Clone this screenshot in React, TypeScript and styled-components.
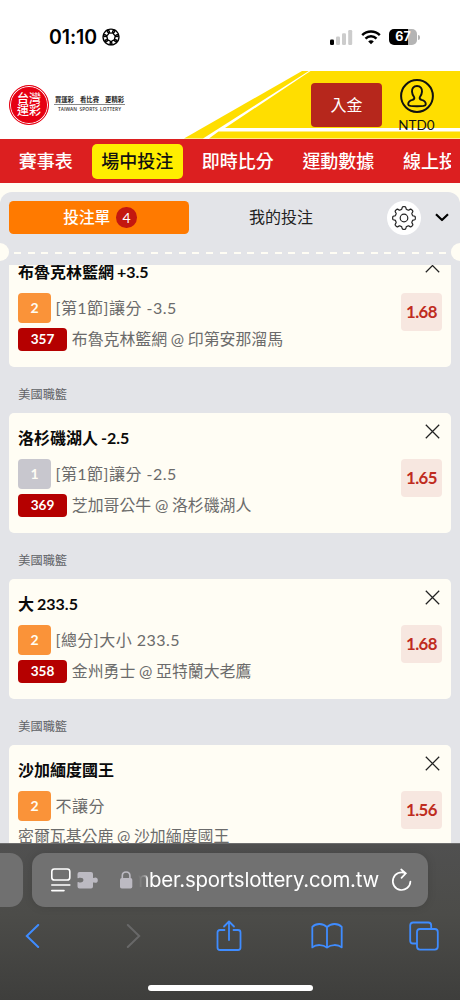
import React from 'react';
import styled, { createGlobalStyle, css } from 'styled-components';

const Global = createGlobalStyle`
  * { box-sizing: border-box; }
  body {
    margin: 0;
    background: #fff;
    font-family: Lato, "Noto Sans CJK TC", sans-serif;
  }
`;

const Screen = styled.div`
  width: 460px;
  height: 1000px;
  overflow: hidden;
  display: flex;
  flex-direction: column;
  background: #fffdf4;
`;

const StatusBar = styled.div`
  height: 71px;
  flex: none;
  background: #fff;
  display: flex;
  justify-content: space-between;
  align-items: flex-start;
  padding: 27px 40px 0 49px;
`;

const StatusGroup = styled.div<{ $gap: number }>`
  display: flex;
  align-items: center;
  height: 20px;
  gap: ${(p) => p.$gap}px;
`;

const Clock = styled.span`
  font: 600 19.5px/20px Inter, sans-serif;
  letter-spacing: -0.1px;
  color: #000;
`;

const Battery = styled.div`
  width: 28px;
  height: 16px;
  border-radius: 5px;
  background: linear-gradient(90deg, #000 67%, #b4b4b4 67%);
  color: #fff;
  font: 700 12.5px/16px Inter, sans-serif;
  text-align: center;
`;

const BatteryWrap = styled.div`
  display: flex;
  align-items: center;
  gap: 1px;
  &::after {
    content: '';
    width: 2px;
    height: 5px;
    border-radius: 0 2px 2px 0;
    background: #b4b4b4;
  }
`;

const Header = styled.header`
  height: 67.5px;
  flex: none;
  position: relative;
  background: #fff;
  display: flex;
  align-items: flex-start;
  padding-left: 9px;
`;

const HeaderArt = styled.svg`
  position: absolute;
  inset: 0;
`;

const Seal = styled.div`
  width: 40px;
  height: 40px;
  margin-top: 13.5px;
  border-radius: 50%;
  background: #e60012;
  border: 1.3px solid #e60012;
  box-shadow: inset 0 0 0 0.9px #fff;
  color: #fff;
  font: 500 12px/12.5px "Noto Sans CJK TC", sans-serif;
  text-align: center;
  padding-top: 6px;
`;

const Slogan = styled.div`
  margin: 24px 0 0 5px;
  width: 71px;
`;

const SloganZh = styled.div`
  display: flex;
  justify-content: space-between;
  padding: 0 1px 0 1px;
  font: 700 6.3px/9px "Noto Sans CJK TC", sans-serif;
  color: #222;
  border-bottom: 0.8px solid #888;
  height: 10px;
`;

const SloganEn = styled.div`
  font: 600 4.8px/7px "Open Sans", sans-serif;
  letter-spacing: 0.08px;
  color: #333;
  text-align: center;
  white-space: nowrap;
  word-spacing: 1px;
  padding-top: 1px;
`;

const Deposit = styled.button`
  position: relative;
  margin: 12px 0 0 186px;
  width: 71px;
  height: 44px;
  padding: 0;
  border: 0;
  border-radius: 4px;
  background: #b6271c;
  color: #fff;
  font: 400 16px/44px Lato, "Noto Sans CJK TC", sans-serif;
`;

const Account = styled.div`
  position: relative;
  margin: 8px 0 0 13px;
  width: 43px;
  display: flex;
  flex-direction: column;
  align-items: center;
  font: 400 13.5px/15px Lato, sans-serif;
  color: #111;
  gap: 5px;
`;

const Nav = styled.nav`
  height: 44.5px;
  flex: none;
  background: #dc1f20;
  padding: 5px 9px 0;
  display: flex;
`;

const NavStrip = styled.div`
  display: flex;
  width: 442px;
  overflow: hidden;
  gap: 9.2px;
`;

const NavItem = styled.a<{ $active?: boolean }>`
  flex: none;
  height: 35.5px;
  padding: 0 9.7px;
  border-radius: 5px;
  font: 500 18px/33px "Noto Sans CJK TC", sans-serif;
  color: ${(p) => (p.$active ? '#111' : '#fff')};
  background: ${(p) => (p.$active ? '#ffee00' : 'transparent')};
`;

const Slip = styled.section`
  margin-top: 9px;
  height: 651px;
  flex: none;
  display: flex;
  flex-direction: column;
  background: #e3e4e8;
  border-radius: 12px 12px 0 0;
`;

const Tabs = styled.div`
  height: 51px;
  flex: none;
  display: flex;
  align-items: center;
  padding: 0 9px;
`;

const Tab = styled.div<{ $active?: boolean }>`
  height: 32.5px;
  border-radius: 4.5px;
  display: flex;
  align-items: flex-start;
  justify-content: center;
  gap: 6px;
  font: 400 16px/31.5px "Noto Sans CJK TC", sans-serif;
  ${(p) =>
    p.$active
      ? css`width: 180px; background: #ff7a00; color: #fff; font-weight: 500; font-size: 15.7px; padding-left: 2px;`
      : css`width: 184px; color: #222;`}
`;

const Count = styled.span`
  width: 20.5px;
  height: 20.5px;
  margin-top: 6px;
  border-radius: 50%;
  background: #c3170f;
  font: 400 14px/21px Lato, sans-serif;
  text-align: center;
`;

const GearButton = styled.div`
  width: 34px;
  height: 34px;
  margin: 0 14px;
  border-radius: 50%;
  background: #fff;
  display: grid;
  place-items: center;
`;

const Perforation = styled.div`
  height: 18px;
  flex: none;
  display: flex;
  justify-content: space-between;
  align-items: center;
  overflow: hidden;
`;

const Notch = styled.div<{ $side: 'left' | 'right' }>`
  width: 9px;
  height: 18px;
  background: #fffdf4;
  border-radius: ${(p) => (p.$side === 'left' ? '0 9px 9px 0' : '9px 0 0 9px')};
`;

const Dashes = styled.div`
  flex: 1;
  height: 2px;
  margin: 2px 4px 0 5px;
  background: repeating-linear-gradient(90deg, #fffdf4 0 7px, transparent 7px 13.72px);
`;

const List = styled.div`
  margin-top: 4px;
  height: 578px;
  flex: none;
  overflow: hidden;
  padding: 0 9px;
  display: flex;
  flex-direction: column;
`;

const League = styled.div`
  height: 46px;
  flex: none;
  padding-left: 9.3px;
  font: 400 12.2px/55px "Noto Sans CJK TC", sans-serif;
  color: #606266;
`;

const Card = styled.article<{ $first?: boolean }>`
  height: 119.8px;
  flex: none;
  margin-top: ${(p) => (p.$first ? '-17.6px' : '0')};
  border-radius: 5px;
  background: #fffdf4;
  padding: 0 9px;
  display: flex;
  justify-content: space-between;
`;

const Info = styled.div`
  padding-top: 14px;
`;

const Pick = styled.div`
  font: 700 16px/22px Lato, "Noto Sans CJK TC", sans-serif;
  color: #0a0a0a;
  white-space: nowrap;
  word-spacing: -0.9px;
`;

const Line = styled.div<{ $tall?: boolean }>`
  display: flex;
  align-items: center;
  height: ${(p) => (p.$tall ? 30 : 23)}px;
  margin-top: ${(p) => (p.$tall ? 10 : 5)}px;
  gap: ${(p) => (p.$tall ? 4.5 : 4.8)}px;
`;

const Detail = styled.span<{ $spaced?: boolean }>`
  font: 400 ${(p) => (p.$spaced ? 16 : 15.9)}px/22px Lato, "Noto Sans CJK TC", sans-serif;
  letter-spacing: ${(p) => (p.$spaced ? 0.48 : 0)}px;
  word-spacing: ${(p) => (p.$spaced ? 0 : -0.4)}px;
  padding-bottom: ${(p) => (p.$spaced ? 0 : 2)}px;
  color: #6b6b6b;
  white-space: nowrap;
`;

const Side = styled.span<{ $muted?: boolean }>`
  width: 33px;
  height: 30px;
  border-radius: 4px;
  background: ${(p) => (p.$muted ? '#c8c7ce' : '#fa9339')};
  color: #fffdf4;
  font: 700 14px/30px Lato, sans-serif;
  text-align: center;
`;

const Code = styled.span`
  width: 49px;
  height: 23px;
  border-radius: 4px;
  background: #b50000;
  color: #fff;
  font: 700 13.6px/23px Lato, sans-serif;
  text-align: center;
`;

const Actions = styled.div`
  width: 41px;
  display: flex;
  flex-direction: column;
  align-items: flex-end;
  padding-top: 11px;
`;

const CloseIcon = styled.svg`
  margin-right: 2.5px;
  flex: none;
`;

const Odds = styled.div`
  width: 41px;
  height: 38px;
  margin-top: 20px;
  border-radius: 4px;
  background: #f7e7e0;
  color: #bf2c20;
  font: 700 16.8px/38px Lato, sans-serif;
  letter-spacing: -0.5px;
  text-align: center;
`;

const Browser = styled.footer`
  height: 157px;
  flex: none;
  padding-top: 8.5px;
  background: linear-gradient(#505050 0%, #4c4c49 45%, #3e3e3c 100%);
  border-top: 1px solid #6e6e6e;
  display: flex;
  flex-direction: column;
`;

const AddressRow = styled.div`
  display: flex;
  gap: 9px;
`;

const PreviousPill = styled.div`
  width: 23px;
  height: 54.5px;
  background: #707070;
  border-radius: 0 13px 13px 0;
`;

const AddressPill = styled.div`
  width: 396px;
  height: 54.5px;
  border-radius: 13px;
  background: #717171;
  box-shadow: 0 0 10px rgba(0, 0, 0, 0.12);
  display: flex;
  align-items: center;
  padding-left: 18px;
`;

const Url = styled.span`
  margin-left: 4px;
  width: 241px;
  font: 400 20.4px/26px Inter, sans-serif;
  letter-spacing: -0.2px;
  color: #fff;
  white-space: nowrap;
  overflow: hidden;
  display: flex;
  justify-content: flex-end;
  mask-image: linear-gradient(90deg, transparent 0, rgba(0, 0, 0, 0.25) 6px, rgba(0, 0, 0, 0.4) 8px, #000 9px);
`;

const Toolbar = styled.div`
  display: grid;
  grid-template-columns: 101px 90px 94.5px 98.5px 30px;
  align-items: center;
  height: 30px;
  margin-top: 12.5px;
  padding-left: 25px;
`;

const HomeIndicator = styled.div`
  width: 165px;
  height: 6px;
  border-radius: 3px;
  background: #fff;
  margin: 35px 0 0 147.5px;
`;

const gearPath = (() => {
  const pts: string[] = [];
  for (let i = 0; i <= 160; i++) {
    const a = (i / 160) * Math.PI * 2;
    const r = 10.1 + 1.25 * Math.tanh(2.4 * Math.cos(8 * a));
    pts.push(`${(12 + r * Math.sin(a)).toFixed(2)} ${(12 - r * Math.cos(a)).toFixed(2)}`);
  }
  return `M${pts.join('L')}Z`;
})();

const Rosette = () => (
  <svg width="18" height="18" viewBox="-9 -9 18 18" fill="none" stroke="#000" strokeWidth="1.4">
    {[0, 1, 2, 3, 4, 5, 6].map((i) => (
      <ellipse key={i} cx="0" cy="-5.9" rx="3.7" ry="2" transform={`rotate(${(i * 360) / 7})`} />
    ))}
  </svg>
);

const Signal = () => (
  <svg width="23" height="15" viewBox="0 0 23 15">
    <rect x="0" y="9.5" width="4" height="5.5" rx="1.2" fill="#000" />
    <rect x="6" y="6.5" width="4" height="8.5" rx="1.2" fill="#ccc" />
    <rect x="12" y="3.3" width="4" height="11.7" rx="1.2" fill="#ccc" />
    <rect x="18.2" y="0" width="4" height="15" rx="1.2" fill="#ccc" />
  </svg>
);

const Wifi = () => (
  <svg width="20" height="15" viewBox="0 0 20 15" fill="none" stroke="#000" strokeWidth="2.5">
    <path d="M1.2 5.2C6.2 0.3 13.8 0.3 18.8 5.2" />
    <path d="M4.5 8.6C7.6 5.6 12.4 5.6 15.5 8.6" />
    <path d="M10 14.2L7.2 11.4C8.8 9.9 11.2 9.9 12.8 11.4Z" fill="#000" stroke="none" />
  </svg>
);

const Person = () => (
  <svg width="34" height="34" viewBox="0 0 34 34" fill="none" stroke="#111">
    <circle cx="17" cy="17" r="15.9" strokeWidth="2" />
    <path
      strokeWidth="1.9"
      strokeLinejoin="round"
      d="M17 7C13.6 7 11.8 9.3 12 12.6C12.1 15 13 16.6 14.2 18.2C14.6 19.4 14.1 20.3 12.5 20.9C9.5 21.7 8.2 22.9 8.2 25.2C8.3 27 10.9 27.3 17 27.3C23.1 27.3 25.7 27 25.8 25.2C25.8 22.9 24.5 21.7 21.5 20.9C19.9 20.3 19.4 19.4 19.8 18.2C21 16.6 21.9 15 22 12.6C22.2 9.3 20.4 7 17 7Z"
    />
  </svg>
);

type Bet = { pick: string; side: string; market: string; code?: string; match: string; odds: string };

const bets: Bet[] = [
  { pick: '布魯克林籃網 +3.5', side: '2', market: '[第1節]讓分 -3.5', code: '357', match: '布魯克林籃網 @ 印第安那溜馬', odds: '1.68' },
  { pick: '洛杉磯湖人 -2.5', side: '1', market: '[第1節]讓分 -2.5', code: '369', match: '芝加哥公牛 @ 洛杉磯湖人', odds: '1.65' },
  { pick: '大 233.5', side: '2', market: '[總分]大小 233.5', code: '358', match: '金州勇士 @ 亞特蘭大老鷹', odds: '1.68' },
  { pick: '沙加緬度國王', side: '2', market: '不讓分', match: '密爾瓦基公鹿 @ 沙加緬度國王', odds: '1.56' },
];

const BetCard = ({ bet, first }: { bet: Bet; first: boolean }) => (
  <Card $first={first}>
    <Info>
      <Pick>{bet.pick}</Pick>
      <Line $tall>
        <Side $muted={bet.side === '1'}>{bet.side}</Side>
        <Detail $spaced>{bet.market}</Detail>
      </Line>
      <Line>
        {bet.code && <Code>{bet.code}</Code>}
        <Detail>{bet.match}</Detail>
      </Line>
    </Info>
    <Actions>
      <CloseIcon width="15" height="15" viewBox="0 0 15 15" stroke="#222" strokeWidth="1.25">
        <path d="M0.8 0.8L14.2 14.2M14.2 0.8L0.8 14.2" />
      </CloseIcon>
      <Odds>{bet.odds}</Odds>
    </Actions>
  </Card>
);

export default function App() {
  return (
    <Screen>
      <Global />
      <StatusBar>
        <StatusGroup $gap={5}>
          <Clock>01:10</Clock>
          <Rosette />
        </StatusGroup>
        <StatusGroup $gap={8}>
          <Signal />
          <Wifi />
          <BatteryWrap>
            <Battery>67</Battery>
          </BatteryWrap>
        </StatusGroup>
      </StatusBar>

      <Header>
        <HeaderArt width="460" height="67.5" viewBox="0 0 460 67.5" fill="#ffde00">
          <path d="M302 0H308.8L203 67.5H184Z" />
          <path d="M310.5 0H460V57H225Z" />
          <path d="M218.5 60.5H460V67.5H209Z" />
        </HeaderArt>
        <Seal>
          台灣
          <br />
          運彩
        </Seal>
        <Slogan>
          <SloganZh>
            <span>買運彩</span>
            <span>看比賽</span>
            <span>更精彩</span>
          </SloganZh>
          <SloganEn>TAIWAN SPORTS LOTTERY</SloganEn>
        </Slogan>
        <Deposit>入金</Deposit>
        <Account>
          <Person />
          NTD0
        </Account>
      </Header>

      <Nav>
        <NavStrip>
          <NavItem>賽事表</NavItem>
          <NavItem $active>場中投注</NavItem>
          <NavItem>即時比分</NavItem>
          <NavItem>運動數據</NavItem>
          <NavItem>線上投注</NavItem>
        </NavStrip>
      </Nav>

      <Slip>
        <Tabs>
          <Tab $active>
            投注單<Count>4</Count>
          </Tab>
          <Tab>我的投注</Tab>
          <GearButton>
            <svg width="24" height="24" viewBox="0 0 24 24" fill="none" stroke="#222" strokeWidth="1.2">
              <path d={gearPath} />
              <circle cx="12" cy="12" r="3.8" />
            </svg>
          </GearButton>
          <svg width="14" height="9" viewBox="0 0 14 9" fill="none" stroke="#000" strokeWidth="2.2">
            <path d="M1 1.3L7 7L13 1.3" strokeLinejoin="round" />
          </svg>
        </Tabs>
        <Perforation>
          <Notch $side="left" />
          <Dashes />
          <Notch $side="right" />
        </Perforation>
        <List>
          {bets.map((bet, i) => (
            <React.Fragment key={bet.pick}>
              {i > 0 && <League>美國職籃</League>}
              <BetCard bet={bet} first={i === 0} />
            </React.Fragment>
          ))}
        </List>
      </Slip>

      <Browser>
        <AddressRow>
          <PreviousPill />
          <AddressPill>
            <svg width="50" height="26" viewBox="0 0 50 26">
              <g fill="none" stroke="#fff" strokeWidth="1.6" strokeLinecap="round">
                <rect x="1.8" y="2" width="18" height="11" rx="2.6" />
                <path d="M1.8 18H19.8M1.8 23.6H14" />
              </g>
              <path
                fill="#bcbac2"
                d="M29.5 5H41Q43 5 43 7V10.8Q44 11.3 45.2 10.6Q47.8 10.6 47.8 13.2Q47.8 15.8 45.2 15.8Q44 15.1 43 15.6V19.5Q43 21.5 41 21.5H29.5Q27.5 21.5 27.5 19.5V15.2Q28.4 14.7 29.4 15.4Q33.4 15.8 33.4 13.1Q33.4 10.4 29.4 10.8Q28.4 11.5 27.5 11V7Q27.5 5 29.5 5Z"
              />
            </svg>
            <svg width="34" height="20" viewBox="0 0 34 20">
              <rect x="20" y="8" width="12.3" height="10.6" rx="1.8" fill="#bcbac2" />
              <path d="M22.3 9V5.8C22.3 0.8 29.9 0.8 29.9 5.8V9" fill="none" stroke="#bcbac2" strokeWidth="1.6" />
            </svg>
            <Url>member.sportslottery.com.tw</Url>
            <svg width="46" height="24" viewBox="-13 0 46 24" fill="none" stroke="#fff" strokeWidth="1.7" strokeLinecap="round">
              <path d="M13.5 5.3A8.8 8.8 0 1 0 18.4 13.5M9.2 1.5L13.8 5.3L9.5 9.8" />
            </svg>
          </AddressPill>
        </AddressRow>
        <Toolbar>
          <svg width="15" height="24" viewBox="0 0 15 24" fill="none" stroke="#3f8cff" strokeWidth="2" strokeLinecap="round">
            <path d="M13.2 1L1.8 12L13.2 23" />
          </svg>
          <svg width="15" height="24" viewBox="0 0 15 24" fill="none" stroke="#686868" strokeWidth="2" strokeLinecap="round">
            <path d="M1.8 1L13.2 12L1.8 23" />
          </svg>
          <svg width="26" height="32" viewBox="0 0 26 32" fill="none" stroke="#3f8cff" strokeWidth="1.8" strokeLinecap="round" strokeLinejoin="round">
            <path d="M8.5 10H4Q1.5 10 1.5 12.5V27.5Q1.5 30 4 30H22Q24.5 30 24.5 27.5V12.5Q24.5 10 22 10H17.5M13 20V2M8 6.5L13 1.5L18 6.5" />
          </svg>
          <svg width="32" height="26" viewBox="0 0 32 26" fill="none" stroke="#3f8cff" strokeWidth="1.8" strokeLinejoin="round">
            <path d="M16 4.2C12 0 5 0 1.3 3.8V24.4C5 21.2 12 21.2 16 24.6C20 21.2 27 21.2 30.7 24.4V3.8C27 0 20 0 16 4.2ZM16 4.2V24.6" />
          </svg>
          <svg width="30" height="30" viewBox="0 0 30 30" fill="none" stroke="#3f8cff" strokeWidth="1.8">
            <path d="M8 22.5H4Q1.2 22.5 1.2 19.7V4.5Q1.2 1.5 4.2 1.5H19.3Q22.2 1.5 22.2 4.5V8" />
            <rect x="8" y="8" width="20.8" height="20.6" rx="3" />
          </svg>
        </Toolbar>
        <HomeIndicator />
      </Browser>
    </Screen>
  );
}
